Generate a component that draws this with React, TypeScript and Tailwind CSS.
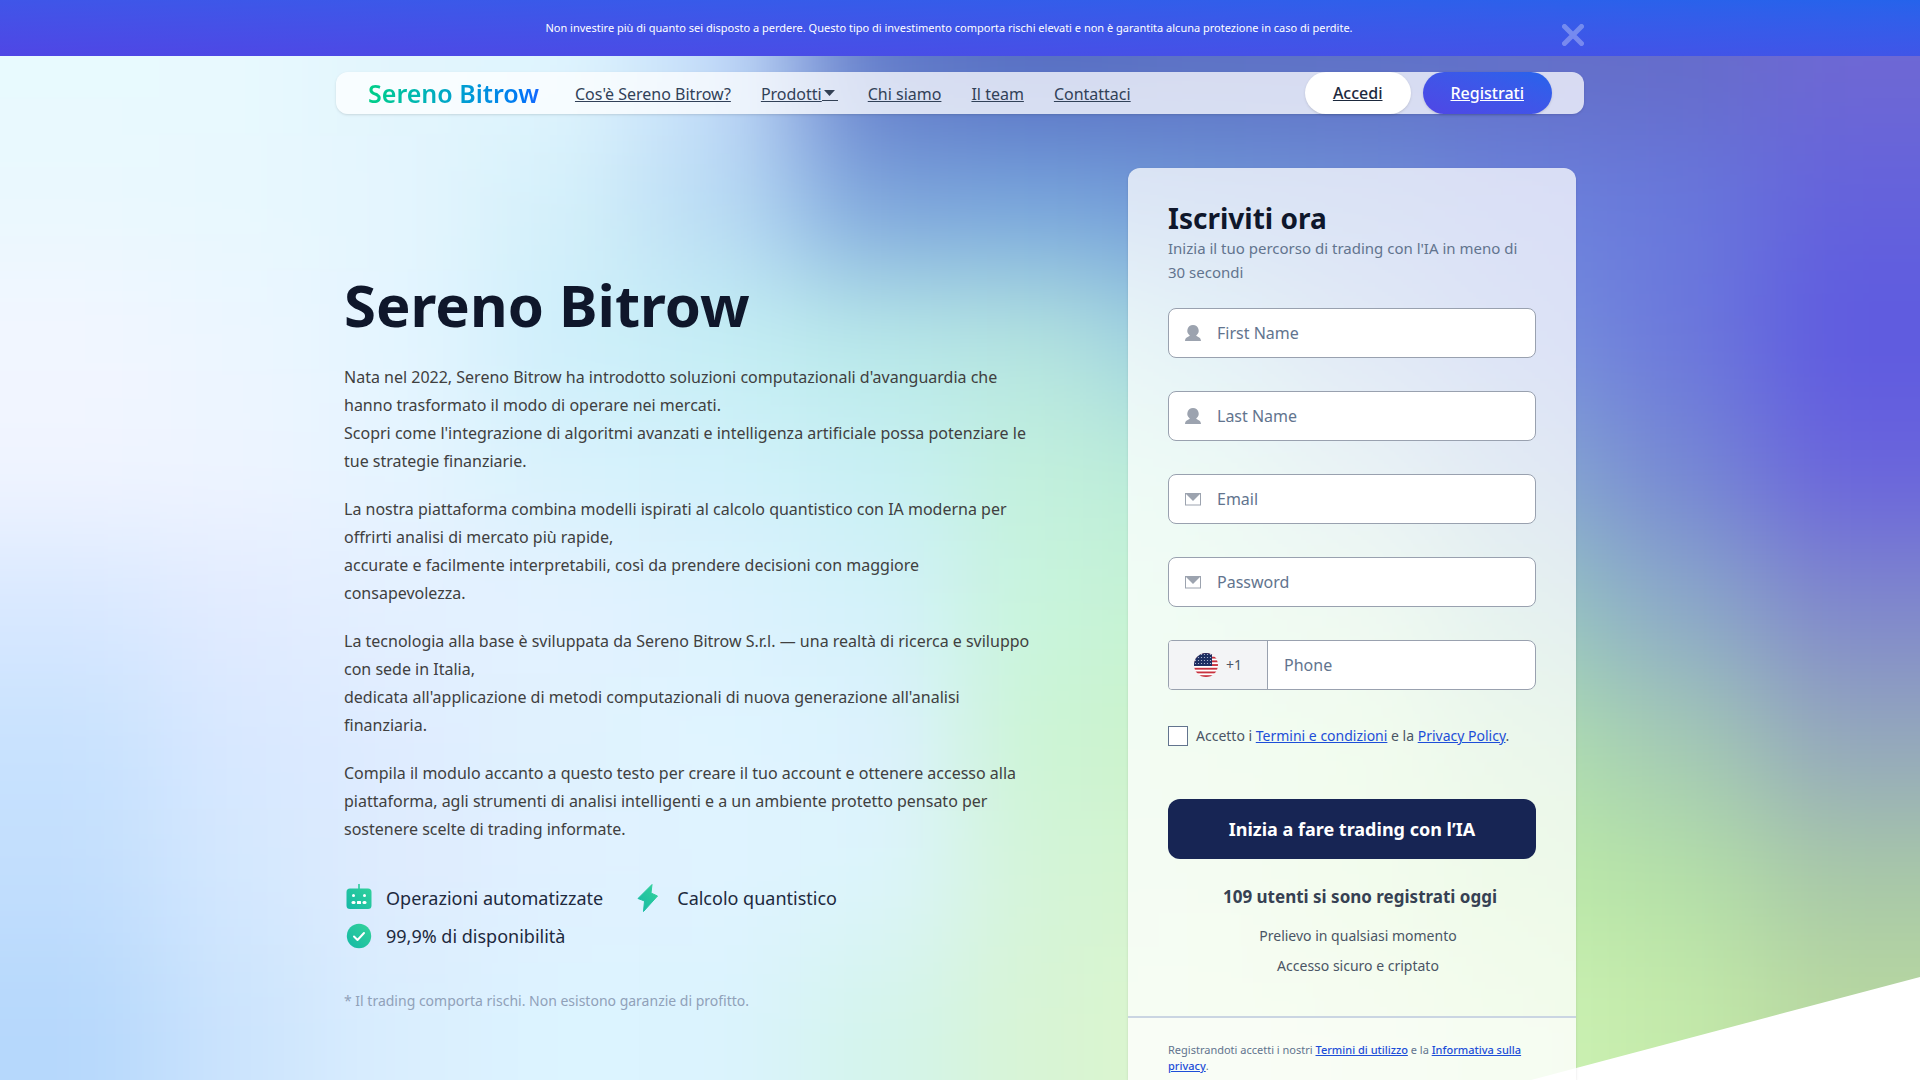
import React, { useState } from "react";

interface FieldProps {
  id: string;
  label: string;
  type: string;
  icon: "user" | "mail";
}

const navLinks = ["Cos'è Sereno Bitrow?", "Prodotti", "Chi siamo", "Il team", "Contattaci"];

const fields: FieldProps[] = [
  { id: "first-name", label: "First Name", type: "text", icon: "user" },
  { id: "last-name", label: "Last Name", type: "text", icon: "user" },
  { id: "email", label: "Email", type: "email", icon: "mail" },
  { id: "password", label: "Password", type: "password", icon: "mail" },
];

// colour samples of the mesh gradient, row by row
const mesh = [
  "e8fafe e8f9fe e2f5fd e0f5fe c4dcfa 6078c8 566cc2 5c70c4 5e70c6 626fc8 656cca 6e68d4",
  "eaf8fe e8f8fe e4f5fe d4f0fa b8daf4 7ca4dc 76a4dc 7098d8 7090d8 6c82dc 6878dc 6462dc",
  "f2f6ff ecf6ff e4f5ff ceeffb c4eef4 b8e9e8 b4e4e0 98cce0 88a8dc 7690dc 6c78dc 5e5ae0",
  "f0f4ff eef4ff e6f4ff d8f2fc d2f1fb c8f0f4 c2f0dc b8ead8 a8ccd8 88aad0 7688d4 6a64dc",
  "d8e8ff e2ebff e4f0ff e4f2ff dcf2fe d4f2fa c8f4dc c4f2d0 c0e8c8 98c8c0 8caac8 8088cc",
  "c8e2fe d8e8ff dfecff dff2fe e0f4ff dcf2fe ccf4d4 ccf2c8 c8f2bc b0e0b0 a4cab4 94a8bc",
  "c2defd d4e8fe dfecfe e0f0ff dff3ff dcf4fc d4f4d8 d4f4cc ccf2b8 bceaa8 b4e0a8 a8c8a8",
  "b6d8fc cce4fd daeefe dcf4ff dbf3fe d4f4ec d8f4d4 dcf6cc d8f4c4 ccf2b4 c4eaaa b8d8a0",
].map((row) => row.split(" "));

const Backdrop = () => {
  const rows = mesh.length;
  const cols = mesh[0].length;

  return (
    <svg
      aria-hidden="true"
      viewBox="0 0 1920 1080"
      preserveAspectRatio="none"
      className="absolute inset-0 h-full w-full"
    >
      <defs>
        <filter id="soften" filterUnits="userSpaceOnUse" x="-400" y="-400" width="2720" height="1880" colorInterpolationFilters="sRGB">
          <feGaussianBlur stdDeviation="56" />
        </filter>
      </defs>
      <g filter="url(#soften)">
        {mesh.map((row, r) =>
          row.map((color, c) => {
            // edge cells bleed outwards so the blur never fades at the border
            const x = c === 0 ? -300 : c * 160;
            const y = r === 0 ? -300 : r * 135;
            const right = c === cols - 1 ? 2220 : (c + 1) * 160 + 1;
            const bottom = r === rows - 1 ? 1380 : (r + 1) * 135 + 1;
            return <rect key={`${r}-${c}`} x={x} y={y} width={right - x} height={bottom - y} fill={`#${color}`} />;
          })
        )}
      </g>
      <polygon points="1920,977 1920,1080 1531,1080" fill="#fff" />
    </svg>
  );
};

const UserIcon = () => (
  <svg viewBox="0 0 16 16" className="h-4 w-4" fill="#9ca3af">
    <path d="M8 0a5.700 5.700 0 0 1 3.200 10.400C11.500 11.600 16 11.700 16 16H0c0-4.300 4.500-4.400 4.800-5.600A5.700 5.700 0 0 1 8 0z" />
  </svg>
);

const MailIcon = () => (
  <svg viewBox="0 0 16 13" className="h-[13px] w-4">
    <rect x="0.5" y="0.5" width="15" height="11.500" fill="#fff" stroke="#9ca3af" />
    <path d="M0.500 0.500h15L8 8z" fill="#9ca3af" />
  </svg>
);

const BotIcon = () => (
  <svg viewBox="0 0 30 30" className="h-[30px] w-[30px]" fill="url(#green)">
    <defs>
      <linearGradient id="green" x1="1" y1="0" x2="0" y2="1">
        <stop offset="0" stopColor="#34d399" />
        <stop offset="1" stopColor="#14b8a6" />
      </linearGradient>
    </defs>
    <path d="M14.200 1h1.600v4.500H24a3.500 3.500 0 0 1 3.500 3.500v13.500A3.500 3.500 0 0 1 24 26H6a3.500 3.500 0 0 1-3.500-3.500V9A3.500 3.500 0 0 1 6 5.500h8.200z" />
    <g fill="#fff">
      <circle cx="9.500" cy="12.500" r="1.500" />
      <circle cx="20.500" cy="12.500" r="1.500" />
      <rect x="7.500" y="18" width="4" height="3" rx="1.500" />
      <rect x="13" y="18" width="4" height="3" rx="0.500" />
      <rect x="18.500" y="18" width="4" height="3" rx="1.500" />
    </g>
  </svg>
);

const BoltIcon = () => (
  <svg viewBox="0 0 30 30" className="h-[30px] w-[30px]" fill="url(#green)" stroke="url(#green)" strokeLinejoin="round">
    <path d="M17 1.500L3 15.500l6.500 2.500-1 10.500L22.500 13l-6.500-3z" />
  </svg>
);

const CheckIcon = () => (
  <svg viewBox="0 0 30 30" className="h-[30px] w-[30px]">
    <circle cx="15" cy="15" r="12.200" fill="url(#green)" />
    <path d="M10 15.500l3.500 3.500 6.500-7" fill="none" stroke="#fff" strokeWidth="2" strokeLinecap="round" strokeLinejoin="round" />
  </svg>
);

const UsFlag = () => (
  <svg viewBox="0 0 24 24" className="h-6 w-6">
    <defs>
      <clipPath id="round-flag">
        <circle cx="12" cy="12" r="12" />
      </clipPath>
      <pattern id="stars" width="3" height="3" patternUnits="userSpaceOnUse">
        <circle cx="1.500" cy="1.500" r="0.600" fill="#c4cbe0" />
      </pattern>
    </defs>
    <g clipPath="url(#round-flag)">
      <rect width="24" height="24" fill="#fff" />
      {[0, 1, 2, 3, 4, 5, 6].map((i) => (
        <rect key={i} y={i * 3.7} width="24" height="1.850" fill="#c8323f" />
      ))}
      <rect width="18" height="13" fill="#1f2f63" />
      <rect width="18" height="13" fill="url(#stars)" />
    </g>
  </svg>
);

const features = [
  { label: "Operazioni automatizzate", Icon: BotIcon },
  { label: "Calcolo quantistico", Icon: BoltIcon },
  { label: "99,9% di disponibilità", Icon: CheckIcon },
];

const Field: React.FC<FieldProps> = ({ id, label, type, icon }) => (
  <div className="flex h-[50px] items-center rounded-lg border border-gray-400 bg-white px-4">
    <label htmlFor={id} className="mr-4 flex w-4 justify-center" aria-label={label}>
      {icon === "user" ? <UserIcon /> : <MailIcon />}
    </label>
    <input
      id={id}
      type={type}
      placeholder={label}
      className="min-w-0 flex-1 bg-transparent text-base text-slate-900 outline-none placeholder:text-slate-500"
    />
  </div>
);

const SignupCard = () => {
  const [accepted, setAccepted] = useState(false);

  return (
    <form className="flex w-full max-w-md flex-col rounded-t-xl bg-white/75 shadow-sm" onSubmit={(e) => e.preventDefault()}>
      <div className="px-10 pt-8">
        <h2 className="text-[28px] leading-9 font-bold text-slate-900">Iscriviti ora</h2>
        <p className="text-[15px] leading-6 text-slate-500">Inizia il tuo percorso di trading con l'IA in meno di 30 secondi</p>

        <div className="mt-6 flex flex-col gap-[33px]">
          {fields.map((f) => (
            <Field key={f.id} {...f} />
          ))}
          <div className="flex h-[50px] overflow-hidden rounded-l-sm rounded-r-lg border border-gray-400 bg-white">
            <button type="button" className="flex w-[99px] items-center justify-center gap-2 border-r border-gray-400 bg-gray-100 text-sm text-gray-600">
              <UsFlag />
              +1
            </button>
            <input
              type="tel"
              aria-label="Phone"
              placeholder="Phone"
              className="min-w-0 flex-1 px-4 text-slate-900 outline-none placeholder:text-slate-500"
            />
          </div>
        </div>

        <div className="mt-9 flex items-center gap-2 text-sm text-gray-600">
          <input
            id="terms"
            type="checkbox"
            checked={accepted}
            onChange={() => setAccepted(!accepted)}
            className="h-5 w-5 appearance-none border border-slate-500 bg-white checked:bg-blue-700"
          />
          <label htmlFor="terms">
            Accetto i <a href="#termini" className="text-[#1d4ed8] underline">Termini e condizioni</a> e la{" "}
            <a href="#privacy" className="text-[#1d4ed8] underline">Privacy Policy</a>.
          </label>
        </div>

        <button type="submit" className="mt-[53px] h-[60px] w-full rounded-xl bg-[#172554] text-lg font-bold text-white">
          Inizia a fare trading con l’IA
        </button>

        <p className="mt-6 pl-4 text-center text-[17px] leading-7 font-bold text-gray-700">109 utenti si sono registrati oggi</p>
        <ul className="mt-[10px] pl-3 text-center text-sm leading-[30px] text-gray-600">
          <li>Prelievo in qualsiasi momento</li>
          <li>Accesso sicuro e criptato</li>
        </ul>
      </div>

      <p className="mt-[35px] flex-1 border-t-2 border-slate-300 bg-white/30 px-10 pt-6 text-[11px] leading-4 text-slate-500">
        Registrandoti accetti i nostri <a href="#utilizzo" className="font-medium text-[#1d4ed8] underline">Termini di utilizzo</a> e la{" "}
        <a href="#informativa" className="font-medium text-[#1d4ed8] underline">Informativa sulla privacy</a>.
      </p>
    </form>
  );
};

const App: React.FC = () => {
  const [bannerOpen, setBannerOpen] = useState(true);

  return (
    <div className="relative flex min-h-screen flex-col font-['Noto_Sans',sans-serif]">
      <Backdrop />

      {bannerOpen && (
        <div className="relative h-14 bg-linear-to-tr from-[#4f46e5] to-[#2563eb]">
          <div className="mx-auto flex max-w-[1248px] justify-between">
            <p className="flex-1 pt-5 text-center text-[11px] leading-4 text-white">
              Non investire più di quanto sei disposto a perdere. Questo tipo di investimento comporta rischi elevati e non è garantita alcuna protezione in caso di perdite.
            </p>
            <button aria-label="Chiudi" onClick={() => setBannerOpen(false)} className="mt-6 h-[22px]">
              <svg viewBox="0 0 22 22" className="h-[22px] w-[22px]" fill="none" stroke="#fff" strokeOpacity="0.3" strokeWidth="5" strokeLinecap="round">
                <path d="M2.500 2.500l17 17M19.500 2.500l-17 17" />
              </svg>
            </button>
          </div>
        </div>
      )}

      <header className="relative mx-auto mt-4 flex w-full max-w-[1248px] items-center justify-between rounded-xl bg-white/75 px-8 shadow">
        <div className="flex items-center">
          <a href="#home" className="mr-9 bg-linear-to-r from-[#06cf86] to-[#1668ff] bg-clip-text text-[25px] leading-8 font-semibold text-transparent">
            Sereno Bitrow
          </a>
          <nav className="flex gap-[30px] pt-0.5 text-slate-700">
            {navLinks.map((link) => (
              <a key={link} href="#nav" className="flex items-center underline">
                {link}
                {link === "Prodotti" && (
                  <svg viewBox="0 0 16 16" className="h-4 w-4" fill="#334155">
                    <path d="M2 4h11L7.500 10z" />
                    <path d="M0 14h16v1H0z" />
                  </svg>
                )}
              </a>
            ))}
          </nav>
        </div>
        <div className="flex gap-3">
          <a href="#accedi" className="flex h-[42px] items-center rounded-full bg-white px-7 font-medium text-slate-800 underline shadow">
            Accedi
          </a>
          <a href="#registrati" className="flex h-[42px] items-center rounded-full bg-linear-to-tr from-[#4f46e5] to-[#2563eb] px-7 font-medium text-white underline shadow">
            Registrati
          </a>
        </div>
      </header>

      <main className="relative mx-auto mt-[54px] flex w-full max-w-[1232px] flex-1 gap-22">
        <section className="flex-1 pt-[101px]">
          <h1 className="text-[58px] leading-[72px] font-bold text-slate-900">Sereno Bitrow</h1>
          <div className="mt-[22px] flex flex-col gap-5 leading-7 text-neutral-700">
            <p>
              Nata nel 2022, Sereno Bitrow ha introdotto soluzioni computazionali d'avanguardia che hanno trasformato il modo di operare nei mercati.
              <br />
              Scopri come l'integrazione di algoritmi avanzati e intelligenza artificiale possa potenziare le tue strategie finanziarie.
            </p>
            <p>
              La nostra piattaforma combina modelli ispirati al calcolo quantistico con IA moderna per offrirti analisi di mercato più rapide,
              <br />
              accurate e facilmente interpretabili, così da prendere decisioni con maggiore consapevolezza.
            </p>
            <p>
              La tecnologia alla base è sviluppata da Sereno Bitrow S.r.l. — una realtà di ricerca e sviluppo con sede in Italia,
              <br />
              dedicata all'applicazione di metodi computazionali di nuova generazione all'analisi finanziaria.
            </p>
            <p>
              Compila il modulo accanto a questo testo per creare il tuo account e ottenere accesso alla piattaforma, agli strumenti di analisi intelligenti e a un ambiente protetto pensato per sostenere scelte di trading informate.
            </p>
          </div>

          <ul className="mt-10 flex flex-wrap gap-x-8 gap-y-2 text-lg text-slate-800">
            {features.map(({ label, Icon }) => (
              <li key={label} className="flex h-[30px] items-center gap-3">
                <Icon />
                {label}
              </li>
            ))}
          </ul>
          <p className="mt-10 text-sm text-slate-400">* Il trading comporta rischi. Non esistono garanzie di profitto.</p>
        </section>

        <SignupCard />
      </main>
    </div>
  );
};

export default App;
